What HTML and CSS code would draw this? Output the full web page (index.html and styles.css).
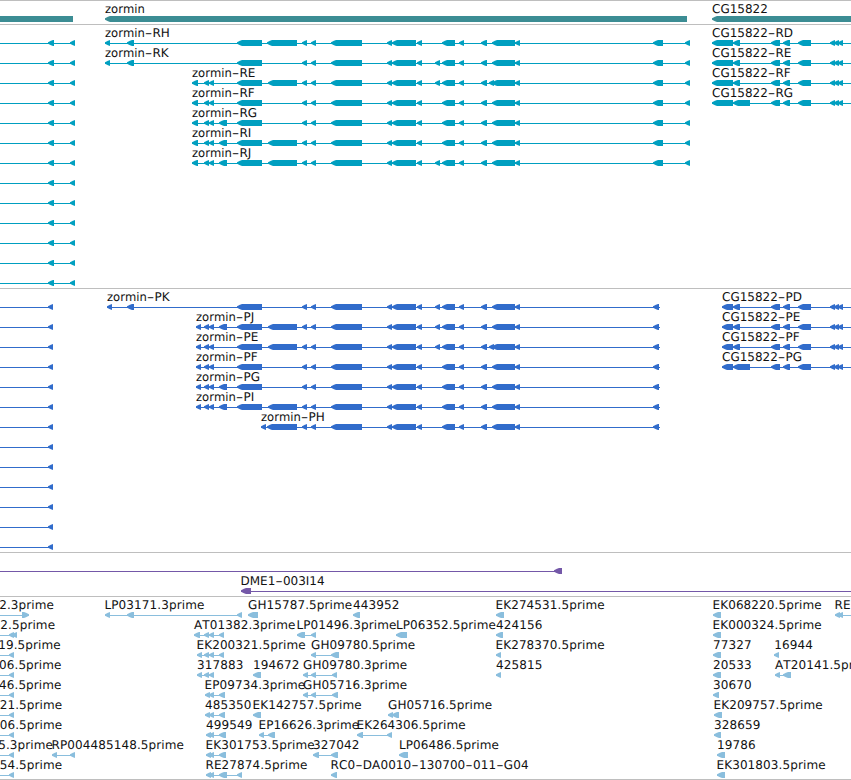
FILE: index.html
```html
<!DOCTYPE html>
<html lang="en">
<head>
    <meta charset="UTF-8">
    <meta name="viewport" content="width=device-width, initial-scale=1.0">
    <title>zormin - genome browser</title>
    <link rel="stylesheet" href="styles.css">
</head>
<body>
    <main class="browser">
        <section class="track gene" id="geneTrack"></section>
        <section class="track mrna" id="mrnaTrack"></section>
        <section class="track cds" id="cdsTrack"></section>
        <section class="track bac" id="bacTrack"></section>
        <section class="track cdna" id="cdnaTrack"></section>
    </main>
    <script src="tracks.js"></script>
</body>
</html>
```

FILE: styles.css
```css
body {
    margin: 0;
    background: #fff;
    font-family: "DejaVu Sans", sans-serif;
    font-size: 12px;
}

.browser {
    display: flex;
    flex-direction: column;
    width: 851px;
    overflow: hidden;
}

.track {
    border-top: 1px solid #bebebe;
    padding-bottom: 3px;
}

.track:last-child {
    padding-bottom: 2px;
    border-bottom: 1px solid #bebebe;
}

.row {
    display: block;
    width: 851px;
    height: 20px;
    overflow: visible;
    fill: currentColor;
}

.label {
    fill: #111;
    font-kerning: none;
    text-rendering: geometricPrecision;
    white-space: pre;
}

.cdna .label {
    letter-spacing: 0.1px;
}

.line {
    shape-rendering: crispEdges;
}

.gene { color: #3c8d94; }
.mrna { color: #009fc0; }
.cds { color: #316ccb; }
.bac { color: #7458a8; }
.cdna { color: #8abedd; }
```

FILE: tracks.js
```js
const SVG = 'http://www.w3.org/2000/svg';

function add(parent, name, attrs) {
    const el = document.createElementNS(SVG, name);
    for (const key in attrs) el.setAttribute(key, attrs[key]);
    parent.appendChild(el);
    return el;
}

// arrow with a 5px head, pointing left unless dir is 1
function arrow(x1, x2, dir) {
    if (dir === 1) {
        return `${x1},15 ${x2 - 5},15 ${x2 - 3},15.7 ${x2},17.3 ${x2},18.7 ${x2 - 3},20.2 ${x2 - 5},21 ${x1},21`;
    }
    return `${x1},17.3 ${x1 + 3},15.7 ${x1 + 5},15 ${x2},15 ${x2},21 ${x1 + 5},21 ${x1 + 3},20.2 ${x1},18.7`;
}

function drawLabel(svg, label, x) {
    const text = add(svg, 'text', { class: 'label', x: x, y: 12 });
    label.split(/(-)/).forEach(part => {
        const attrs = {};
        if (part === '-') {
            attrs.textLength = 7.6;
            attrs.lengthAdjust = 'spacingAndGlyphs';
        } else if (part === 'zormin') {
            attrs.textLength = 39.8;
            attrs.lengthAdjust = 'spacingAndGlyphs';
        }
        add(text, 'tspan', attrs).textContent = part;
    });
}

// feature: [label, label x, line start, line end, [[x1, x2, dir], ...]]
function drawTrack(id, rows) {
    const track = document.getElementById(id);
    rows.forEach(features => {
        const svg = add(track, 'svg', { class: 'row', viewBox: '0 0 851 20' });
        features.forEach(([, , from, to, parts]) => {
            if (to > from) add(svg, 'rect', { class: 'line', x: from, y: 18, width: to - from, height: 1 });
            parts.forEach(p => add(svg, 'polygon', { points: arrow(...p) }));
        });
        features.forEach(([label, x]) => {
            if (label) drawLabel(svg, label, x);
        });
    });
}

// exons shared by the zormin transcripts
const A = [204, 209], B = [209, 214], C = [219, 227], D = [237, 262], E = [268, 297];
const F = [435, 440], G = [489, 494];
const common = [[302, 307], [311, 316], [331, 362], [387, 392], [392, 416], [417, 422],
    [442, 455], [459, 464], [481, 487], [492, 515], [515, 520]];
const cgTail = [[771, 780], [783, 790], [798, 811], [830, 835], [834, 839], [838, 843]];

function zormin(name, x, isCds, exons) {
    const tail = isCds ? [[653, 659]] : [[653, 663], [685, 690]];
    return ['zormin-' + name, x, x, isCds ? 660 : 690, [...exons, ...common, ...tail]];
}

function cg(name, x, second) {
    return ['CG15822-' + name, x, x, 851, [[x, 733], [733, second], ...cgTail]];
}

drawTrack('geneTrack', [[
    ['', 0, 0, 0, [[-10, 73]]],
    ['zormin', 105, 0, 0, [[105, 687]]],
    ['CG15822', 712, 0, 0, [[712, 860]]]
]]);

const mrna = [
    [zormin('RH', 105, false, [[105, 110], [127, 134], D, [267, 297]]), cg('RD', 712, 740)],
    [zormin('RK', 105, false, [[105, 110], [127, 134], D, F]), cg('RE', 712, 740)],
    [zormin('RE', 192, false, [[192, 198], A, B, D, E, F, G]), cg('RF', 712, 740)],
    [zormin('RF', 192, false, [[192, 198], A, B, D]), cg('RG', 712, 750)],
    [zormin('RG', 192, false, [[192, 198], A, B, C, D])],
    [zormin('RI', 192, false, [[192, 198], A, B, C, D, E])],
    [zormin('RJ', 192, false, [[192, 198], A, B, C, D, E, F])],
    [], [], [], [], [], []
];
mrna.forEach(row => row.unshift(['', 0, 0, 75, [[48, 54], [70, 75]]]));
drawTrack('mrnaTrack', mrna);

const cds = [
    [zormin('PK', 107, true, [[107, 112], [127, 134], D, F]), cg('PD', 722, 740)],
    [zormin('PJ', 196, true, [[196, 201], A, B, C, D, E, F]), cg('PE', 722, 740)],
    [zormin('PE', 196, true, [[196, 201], A, B, D, E, F, G]), cg('PF', 722, 740)],
    [zormin('PF', 196, true, [[196, 201], A, B, D]), cg('PG', 722, 750)],
    [zormin('PG', 196, true, [[196, 201], A, B, C, D])],
    [zormin('PI', 196, true, [[196, 201], A, B, C, D, E])],
    [zormin('PH', 261, true, [[261, 266], [267, 297]])],
    [], [], [], [], [], []
];
cds.forEach(row => row.unshift(['', 0, 0, 53, [[48, 53]]]));
drawTrack('cdsTrack', cds);

drawTrack('bacTrack', [
    [['', 0, 0, 562, [[554, 562]]]],
    [['DME1-003I14', 240.5, 241, 851, [[241, 251]]]]
]);

// the line of a cDNA runs from its first part to its last one
function est(label, x, ...parts) {
    return [label, x, parts[0][0], parts[parts.length - 1][1], parts];
}

function edge(label, x, ...parts) {
    return [label, x, 0, parts[parts.length - 1][1], parts];
}

drawTrack('cdnaTrack', [
    [
        edge('2.3prime', -0.8, [22, 29, 1]),
        est('LP03171.3prime', 104.5, [105, 110], [127, 134], [237, 242]),
        est('GH15787.5prime', 248, [248, 258]),
        est('443952', 353, [353, 360]),
        est('EK274531.5prime', 495.5, [496, 504]),
        est('EK068220.5prime', 712.5, [713, 721]),
        ['RE', 834.5, 835, 851, [[835, 840], [838, 843]]]
    ],
    [
        edge('2.5prime', 0.3, [9, 14], [12, 17]),
        est('AT01382.3prime', 194, [194, 200], A, B, [219, 224]),
        est('LP01496.3prime', 296.5, [297, 305], [311, 316]),
        est('LP06352.5prime', 396, [396, 407]),
        est('424156', 496, [496, 503]),
        est('EK000324.5prime', 712.5, [713, 721])
    ],
    [
        edge('19.5prime', -1.8, [9, 14]),
        est('EK200321.5prime', 196.5, [197, 202], A, B, [219, 224]),
        est('GH09780.5prime', 311, [311, 316], [331, 339]),
        est('EK278370.5prime', 495.5, [496, 501]),
        est('77327', 713, [713, 721]),
        est('16944', 774.3, [774, 779])
    ],
    [
        edge('06.5prime', -1, [9, 14]),
        est('317883', 197, [197, 202], A, B),
        est('194672', 253, [253, 261]),
        est('GH09780.3prime', 303, [303, 308], [311, 316], [332, 337]),
        est('425815', 496, [496, 501]),
        est('20533', 713, [713, 721]),
        est('AT20141.5prime', 775, [775, 780], [783, 791])
    ],
    [
        edge('46.5prime', -1, [9, 14]),
        est('EP09734.3prime', 204.5, [205, 210], B, [219, 225]),
        est('GH05716.3prime', 303, [303, 308], [311, 316], [332, 338]),
        est('30670', 713, [713, 719])
    ],
    [
        edge('21.5prime', -0.3, [9, 14]),
        est('485350', 205, [205, 210], B, [219, 225]),
        est('EK142757.5prime', 252.5, [253, 261]),
        est('GH05716.5prime', 388, [388, 393], [392, 399]),
        est('EK209757.5prime', 713.5, [714, 722])
    ],
    [
        edge('06.5prime', -0.3, [9, 14]),
        est('499549', 206, [206, 211], B, [219, 226]),
        est('EP16626.3prime', 258.5, [259, 264], [268, 275]),
        est('EK264306.5prime', 356.5, [357, 363], [387, 392]),
        est('328659', 714, [714, 721])
    ],
    [
        edge('5.3prime', -1.8, [9, 14]),
        est('RP004485148.5prime', 51.5, [52, 57], [70, 75]),
        est('EK301753.5prime', 205.5, [206, 211], B, [219, 226]),
        est('327042', 313, [313, 319], [331, 338]),
        est('LP06486.5prime', 399, [399, 408]),
        est('19786', 717, [717, 725])
    ],
    [
        edge('54.5prime', -0.3, [9, 14]),
        est('RE27874.5prime', 205.5, [206, 211], B, [219, 227], [237, 242]),
        est('RC0-DA0010-130700-011-G04', 330.5, [331, 337]),
        est('EK301803.5prime', 716.5, [717, 725])
    ]
]);
```
